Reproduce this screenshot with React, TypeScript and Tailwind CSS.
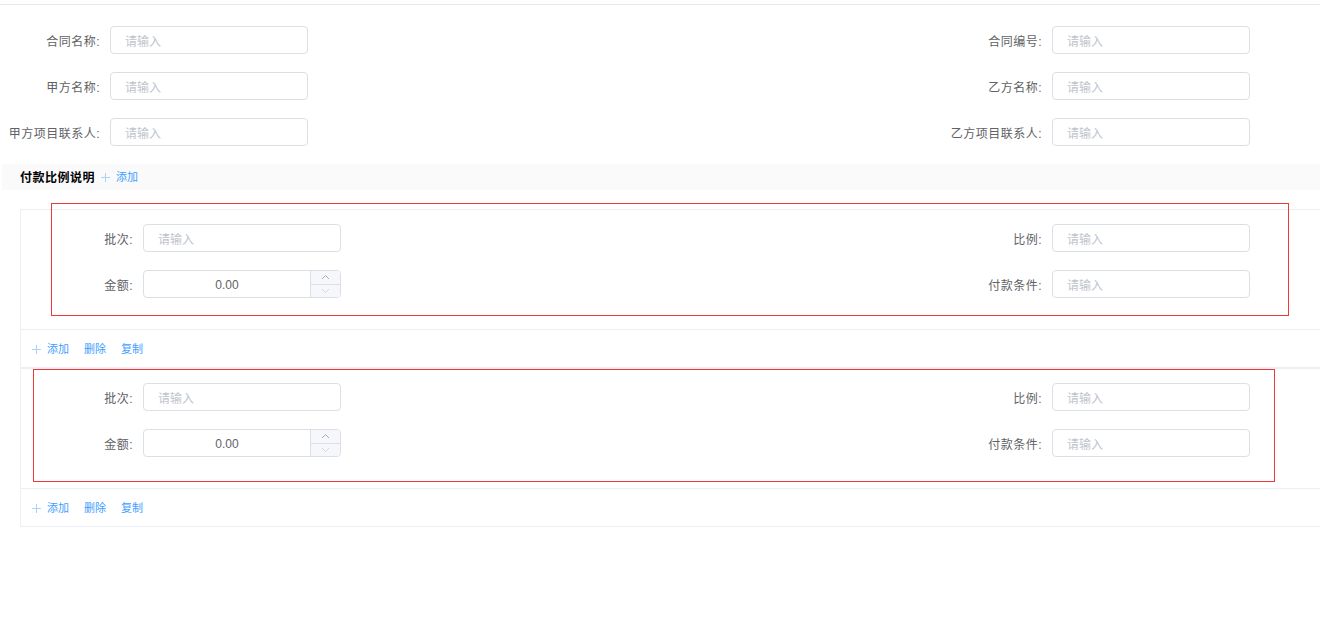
import type { ReactNode } from "react";

const font = "font-['Liberation_Sans','Noto_Sans_CJK_SC',sans-serif]";

function Field({ label, children }: { label: string; children: ReactNode }) {
  return (
    <div className="flex h-[28px] items-center">
      <label className="w-[100px] pt-[3px] text-right text-[12px] tracking-[0.5px] text-[#606266]">{label}</label>
      <div className="ml-[10px]">{children}</div>
    </div>
  );
}

function TextInput() {
  return (
    <input
      readOnly
      placeholder="请输入"
      className="block h-[28px] w-[198px] rounded-[4px] border border-[#dcdfe6] bg-white px-[14px] pt-[3px] text-[12px] text-[#606266] outline-none placeholder:text-[#c0c4cc]"
    />
  );
}

function NumberInput({ value }: { value: string }) {
  return (
    <div className="flex h-[28px] w-[198px] overflow-hidden rounded-[4px] border border-[#dcdfe6] bg-white">
      <div className="flex flex-1 items-center justify-center pt-[2px] text-[12px] text-[#606266]">{value}</div>
      <div className="flex w-[30px] flex-col border-l border-[#dcdfe6] bg-[#f5f7fa]">
        <div className="flex flex-1 items-center justify-center border-b border-[#dcdfe6]">
          <svg width="9" height="6" viewBox="0 0 9 6" fill="none">
            <path d="M1 5L4.5 1.5L8 5" stroke="#a8abb2" strokeWidth="1" />
          </svg>
        </div>
        <div className="flex flex-1 items-center justify-center">
          <svg width="9" height="6" viewBox="0 0 9 6" fill="none">
            <path d="M1 1L4.5 4.5L8 1" stroke="#d4d7de" strokeWidth="1" />
          </svg>
        </div>
      </div>
    </div>
  );
}

function Plus() {
  return (
    <svg width="9" height="9" viewBox="0 0 9 9" fill="none">
      <path d="M4.5 0V9M0 4.5H9" stroke="#a9d3ff" strokeWidth="1" />
    </svg>
  );
}

function PaymentItem({ box }: { box: "first" | "second" }) {
  return (
    <div className="border-b border-t border-[#ebeef5]">
      <div className="relative pb-[31px] pl-[12px] pt-[14px]">
        <div className="flex w-[1217px] flex-col gap-[18px]">
          <div className="flex justify-between">
            <Field label="批次:">
              <TextInput />
            </Field>
            <Field label="比例:">
              <TextInput />
            </Field>
          </div>
          <div className="flex justify-between">
            <Field label="金额:">
              <NumberInput value="0.00" />
            </Field>
            <Field label="付款条件:">
              <TextInput />
            </Field>
          </div>
        </div>
        {box === "first" ? (
          <div className="pointer-events-none absolute left-[30px] top-[-7px] h-[113px] w-[1238px] border border-solid border-[#f03838]" />
        ) : (
          <div className="pointer-events-none absolute left-[12px] top-0 h-[113px] w-[1242px] border border-solid border-[#f03838]" />
        )}
      </div>
      <div className="flex h-[38px] items-center gap-[15px] border-t border-[#ebeef5] pl-[11px] pt-[2px] text-[11px] text-[#409eff]">
        <span className="flex items-center gap-[6px]">
          <Plus />
          添加
        </span>
        <span>删除</span>
        <span>复制</span>
      </div>
    </div>
  );
}

export default function App() {
  return (
    <div className={`h-[636px] w-[1320px] overflow-hidden bg-white pt-[4px] ${font}`}>
      <div className="border-t border-[#e4e7ed]" />
      <div className="flex w-[1250px] flex-col gap-[18px] pt-[21px]">
        <div className="flex justify-between">
          <Field label="合同名称:">
            <TextInput />
          </Field>
          <Field label="合同编号:">
            <TextInput />
          </Field>
        </div>
        <div className="flex justify-between">
          <Field label="甲方名称:">
            <TextInput />
          </Field>
          <Field label="乙方名称:">
            <TextInput />
          </Field>
        </div>
        <div className="flex justify-between">
          <Field label="甲方项目联系人:">
            <TextInput />
          </Field>
          <Field label="乙方项目联系人:">
            <TextInput />
          </Field>
        </div>
      </div>

      <div className="ml-[2px] mt-[18px] flex h-[26px] items-center bg-[#fafafa] pl-[18px] pt-[1px]">
        <span className="text-[12px] font-bold tracking-[0.5px] text-black">付款比例说明</span>
        <span className="ml-[6px] flex items-center gap-[6px] text-[11px] text-[#409eff]">
          <Plus />
          添加
        </span>
      </div>

      <div className="ml-[20px] mt-[19px] w-[1320px] border-l border-[#ebeef5]">
        <PaymentItem box="first" />
        <PaymentItem box="second" />
      </div>
    </div>
  );
}
